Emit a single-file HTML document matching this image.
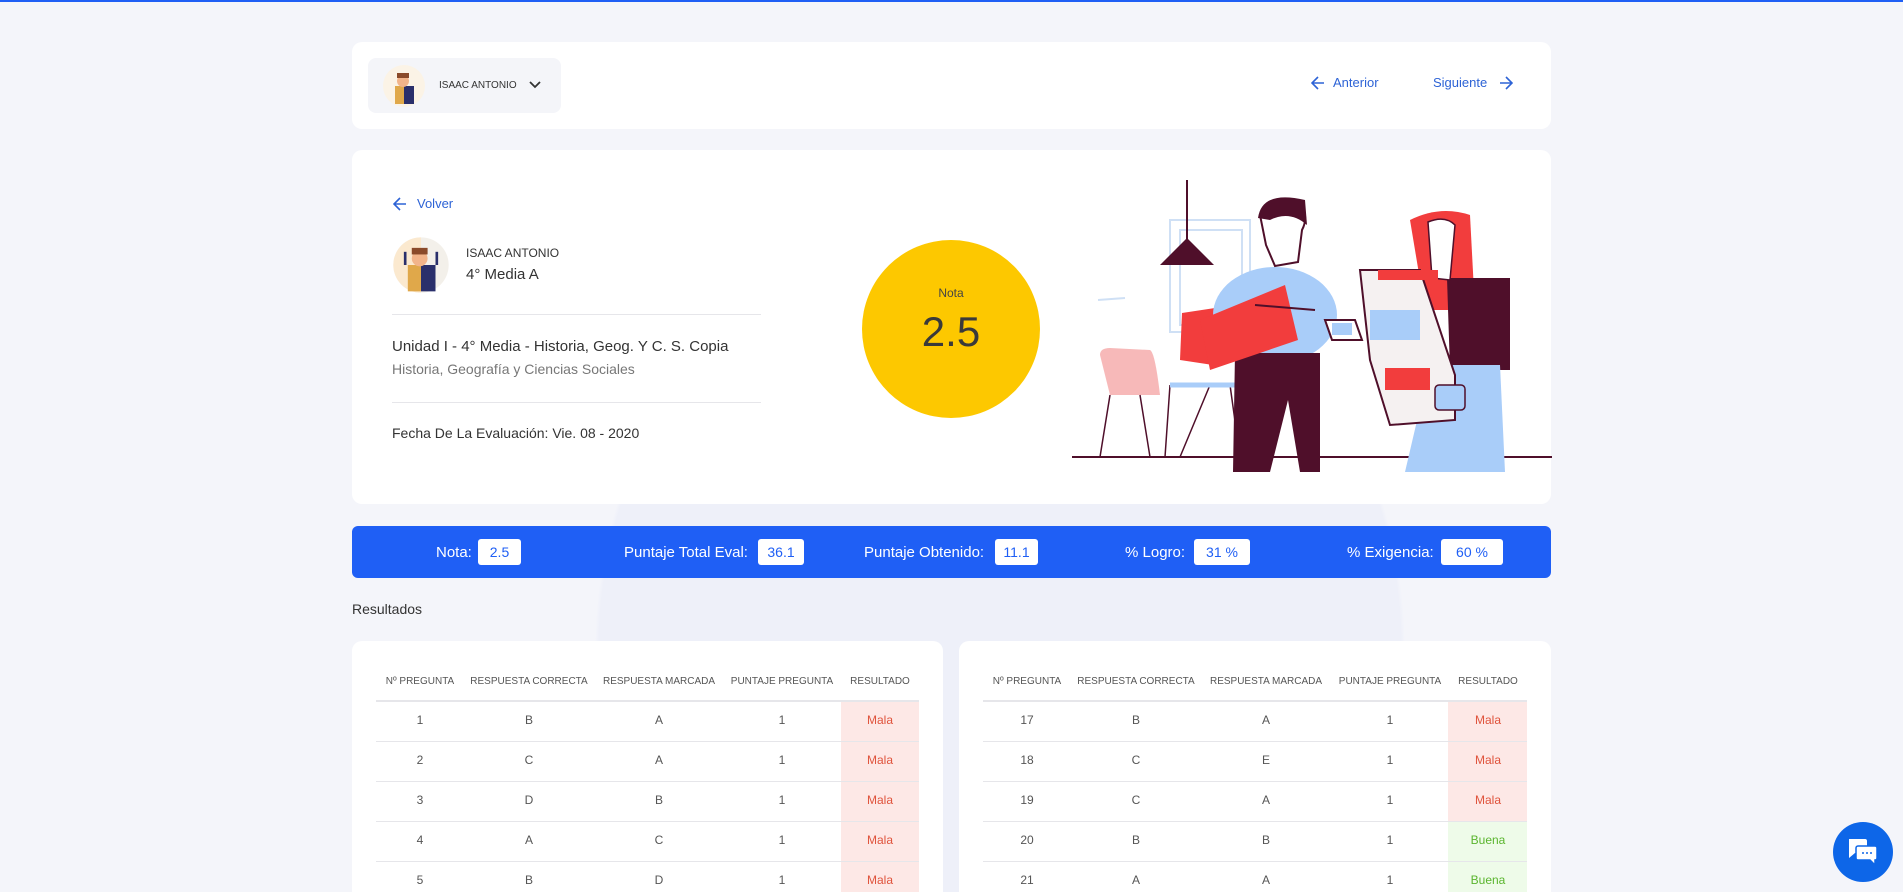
<!DOCTYPE html>
<html style="width:1903px;height:892px;overflow:hidden"><head><meta charset="utf-8"><style>
*{margin:0;padding:0;box-sizing:border-box}
body{width:1903px;height:892px;overflow:hidden;background:#f4f5fa;font-family:"Liberation Sans",sans-serif;position:relative;color:#333}
#wrap{position:absolute;left:0;top:0;width:1903px;height:892px;overflow:hidden;background:radial-gradient(ellipse 405px 450px at 1000px 650px,#eef0f9 99%,rgba(238,240,249,0) 100%)}
.a{position:absolute}
.card{position:absolute;background:#fff;border-radius:10px}
.blue{color:#2d63d6}
.lbl{position:absolute;color:#fff;font-size:15px;top:544px}
.box{position:absolute;background:#fff;border-radius:3px;top:539px;height:26px;font-size:14px;color:#1f5ff5;text-align:center;line-height:26px}
.th{position:absolute;top:676px;font-size:10px;color:#555;transform:translateX(-50%);white-space:nowrap}
.td{position:absolute;font-size:12px;line-height:14px;color:#555;transform:translateX(-50%)}
.hl{position:absolute;height:1px;background:#e6e6ea}
</style></head><body><div id="wrap">
<div class="a" style="left:0;top:0;width:1903px;height:2px;background:#1f5ff5"></div>

<div class="card" style="left:352px;top:42px;width:1199px;height:87px"></div>
<div class="a" style="left:368px;top:58px;width:193px;height:55px;background:#f4f5f9;border-radius:8px"></div>
<svg class="a" style="left:382px;top:64px" width="44" height="44" viewBox="0 0 44 44"><circle cx="22" cy="22" r="21" fill="#fbf3e6"/><rect x="13" y="22" width="9" height="18" fill="#e0a84a"/><rect x="22" y="22" width="10" height="18" fill="#2a2f6b"/><circle cx="21" cy="17" r="6" fill="#f2b48a"/><rect x="15" y="9" width="12" height="5" fill="#8a4a2a"/></svg>
<div class="a" style="left:439px;top:80px;font-size:10px;color:#333">ISAAC ANTONIO</div>
<svg class="a" style="left:529px;top:80px" width="12" height="10" viewBox="0 0 12 10"><path d="M1 2l5 5 5-5" fill="none" stroke="#333" stroke-width="1.8"/></svg>
<svg class="a" style="left:1311px;top:76px" width="14" height="14" viewBox="0 0 14 14"><path d="M13 7H2M7 1L1 7l6 6" fill="none" stroke="#2d63d6" stroke-width="1.6"/></svg>
<div class="a blue" style="left:1333px;top:75px;font-size:13px">Anterior</div>
<div class="a blue" style="left:1433px;top:75px;font-size:13px">Siguiente</div>
<svg class="a" style="left:1499px;top:76px" width="14" height="14" viewBox="0 0 14 14"><path d="M1 7h11M7 1l6 6-6 6" fill="none" stroke="#2d63d6" stroke-width="1.6"/></svg>

<div class="card" style="left:352px;top:150px;width:1199px;height:354px"></div>
<svg class="a" style="left:393px;top:197px" width="14" height="14" viewBox="0 0 14 14"><path d="M13 7H2M7 1L1 7l6 6" fill="none" stroke="#2d63d6" stroke-width="1.6"/></svg>
<div class="a blue" style="left:417px;top:196px;font-size:13px">Volver</div>
<svg class="a" style="left:392px;top:236px" width="58" height="58" viewBox="0 0 44 44"><circle cx="22" cy="22" r="21" fill="#f3f0ea"/><path d="M1 22a21 21 0 0 1 21-21v42A21 21 0 0 1 1 22z" fill="#fbe9cf"/><rect x="12" y="22" width="10" height="20" fill="#e0a84a"/><rect x="22" y="22" width="11" height="20" fill="#2a2f6b"/><circle cx="21" cy="17" r="6" fill="#f2b48a"/><rect x="15" y="9" width="12" height="5" fill="#8a4a2a"/><rect x="9" y="12" width="2" height="10" fill="#2a2f6b"/><rect x="33" y="12" width="2" height="10" fill="#2a2f6b"/></svg>
<div class="a" style="left:466px;top:246px;font-size:12px;color:#333">ISAAC ANTONIO</div>
<div class="a" style="left:466px;top:266px;font-size:15px;color:#333">4° Media A</div>
<div class="hl" style="left:392px;top:314px;width:369px"></div>
<div class="a" style="left:392px;top:338px;font-size:15px;color:#333">Unidad I - 4° Media - Historia, Geog. Y C. S. Copia</div>
<div class="a" style="left:392px;top:361px;font-size:14px;color:#777">Historia, Geografía y Ciencias Sociales</div>
<div class="hl" style="left:392px;top:402px;width:369px"></div>
<div class="a" style="left:392px;top:425px;font-size:14px;color:#333">Fecha De La Evaluación: Vie. 08 - 2020</div>

<div class="a" style="left:862px;top:240px;width:178px;height:178px;border-radius:50%;background:#fdc800"></div>
<div class="a" style="left:862px;top:286px;width:178px;text-align:center;font-size:12px;color:#444">Nota</div>
<div class="a" style="left:862px;top:308px;width:178px;text-align:center;font-size:42px;color:#3a3a3a">2.5</div>

<svg class="a" style="left:1070px;top:170px" width="482" height="320" viewBox="0 0 482 320">
<rect x="100" y="50" width="80" height="112" fill="none" stroke="#cfe0f5" stroke-width="2"/>
<rect x="110" y="60" width="62" height="95" fill="none" stroke="#cfe0f5" stroke-width="2"/>
<line x1="117" y1="10" x2="117" y2="70" stroke="#4f0f2a" stroke-width="2"/>
<path d="M90 95L117 68L144 95Z" fill="#4f0f2a"/>
<line x1="28" y1="130" x2="55" y2="128" stroke="#cfe0f5" stroke-width="2"/>
<path d="M30 185Q30 178 40 178L80 180Q85 182 90 225H40Z" fill="#f7b9b9"/>
<path d="M40 225L30 287M70 225L80 287M100 215L95 287M160 215L170 287M140 215L110 287" stroke="#4f0f2a" stroke-width="1.5" fill="none"/>
<path d="M100 215H175" stroke="#a9cdf9" stroke-width="5"/>
<line x1="2" y1="287" x2="482" y2="287" stroke="#4f0f2a" stroke-width="2"/>
<path d="M112 143L145 138L143 195L110 190Z" fill="#f23d3d"/>
<ellipse cx="205" cy="145" rx="62" ry="48" fill="#a9cdf9"/>
<path d="M165 183H250V302H230L218 230L200 302H163Z" fill="#4f0f2a"/>
<path d="M130 150L215 115L228 170L140 200Z" fill="#f23d3d"/>
<path d="M190 45Q195 25 228 30Q240 45 232 60L228 92L205 96L196 75Z" fill="#fff" stroke="#4f0f2a" stroke-width="2"/>
<path d="M188 48Q192 20 235 30L237 55Q220 40 200 50Z" fill="#4f0f2a"/>
<path d="M185 135L245 140" stroke="#4f0f2a" stroke-width="2"/>
<path d="M255 150H285L292 170H262Z" fill="#fff" stroke="#4f0f2a" stroke-width="2"/><rect x="262" y="153" width="20" height="12" fill="#a9cdf9"/>
<path d="M340 50Q370 35 400 45L405 140L355 140Z" fill="#f23d3d"/>
<path d="M377 108L440 108L440 200L380 200Z" fill="#4f0f2a"/>
<path d="M360 195L430 195L435 302H335Z" fill="#a9cdf9"/>
<path d="M358 52Q375 45 385 55L380 110L362 108Z" fill="#fff" stroke="#4f0f2a" stroke-width="1.5"/>
<path d="M290 100L350 100L385 205L385 250L320 255L300 190Z" fill="#f5f1f1" stroke="#4f0f2a" stroke-width="2"/>
<rect x="300" y="140" width="50" height="30" fill="#a9cdf9"/>
<rect x="315" y="198" width="45" height="22" fill="#f23d3d"/>
<rect x="308" y="100" width="60" height="10" fill="#f23d3d"/>
<rect x="365" y="215" width="30" height="25" rx="4" fill="#a9cdf9" stroke="#4f0f2a" stroke-width="1.5"/>
</svg>

<div class="a" style="left:352px;top:526px;width:1199px;height:52px;background:#1f5ff5;border-radius:6px"></div>
<div class="lbl" style="left:436px">Nota:</div><div class="box" style="left:478px;width:43px">2.5</div>
<div class="lbl" style="left:624px">Puntaje Total Eval:</div><div class="box" style="left:758px;width:46px">36.1</div>
<div class="lbl" style="left:864px">Puntaje Obtenido:</div><div class="box" style="left:995px;width:43px">11.1</div>
<div class="lbl" style="left:1125px">% Logro:</div><div class="box" style="left:1194px;width:56px">31 %</div>
<div class="lbl" style="left:1347px">% Exigencia:</div><div class="box" style="left:1441px;width:62px">60 %</div>

<div class="a" style="left:352px;top:601px;font-size:14px;color:#333">Resultados</div>

<div class="card" style="left:352px;top:641px;width:591px;height:251px;border-radius:10px 10px 0 0"></div>
<div class="card" style="left:959px;top:641px;width:592px;height:251px;border-radius:10px 10px 0 0"></div>

<div class="a" style="left:841px;top:701px;width:78px;height:191px;background:#fde8e6"></div>
<div class="a" style="left:1448px;top:701px;width:79px;height:120px;background:#fde8e6"></div>
<div class="a" style="left:1448px;top:821px;width:79px;height:71px;background:#eefbe9"></div>

<div class="hl" style="left:376px;top:700px;width:543px;height:2px"></div>
<div class="hl" style="left:376px;top:741px;width:543px"></div>
<div class="hl" style="left:376px;top:781px;width:543px"></div>
<div class="hl" style="left:376px;top:821px;width:543px"></div>
<div class="hl" style="left:376px;top:861px;width:543px"></div>
<div class="hl" style="left:983px;top:700px;width:544px;height:2px"></div>
<div class="hl" style="left:983px;top:741px;width:544px"></div>
<div class="hl" style="left:983px;top:781px;width:544px"></div>
<div class="hl" style="left:983px;top:821px;width:544px"></div>
<div class="hl" style="left:983px;top:861px;width:544px"></div>

<div class="th" style="left:420px">Nº PREGUNTA</div><div class="th" style="left:529px">RESPUESTA CORRECTA</div><div class="th" style="left:659px">RESPUESTA MARCADA</div><div class="th" style="left:782px">PUNTAJE PREGUNTA</div><div class="th" style="left:880px">RESULTADO</div>
<div class="th" style="left:1027px">Nº PREGUNTA</div><div class="th" style="left:1136px">RESPUESTA CORRECTA</div><div class="th" style="left:1266px">RESPUESTA MARCADA</div><div class="th" style="left:1390px">PUNTAJE PREGUNTA</div><div class="th" style="left:1488px">RESULTADO</div>

<div class="td" style="left:420px;top:713px">1</div><div class="td" style="left:529px;top:713px">B</div><div class="td" style="left:659px;top:713px">A</div><div class="td" style="left:782px;top:713px">1</div><div class="td" style="left:880px;top:713px;color:#e0533c">Mala</div>
<div class="td" style="left:420px;top:753px">2</div><div class="td" style="left:529px;top:753px">C</div><div class="td" style="left:659px;top:753px">A</div><div class="td" style="left:782px;top:753px">1</div><div class="td" style="left:880px;top:753px;color:#e0533c">Mala</div>
<div class="td" style="left:420px;top:793px">3</div><div class="td" style="left:529px;top:793px">D</div><div class="td" style="left:659px;top:793px">B</div><div class="td" style="left:782px;top:793px">1</div><div class="td" style="left:880px;top:793px;color:#e0533c">Mala</div>
<div class="td" style="left:420px;top:833px">4</div><div class="td" style="left:529px;top:833px">A</div><div class="td" style="left:659px;top:833px">C</div><div class="td" style="left:782px;top:833px">1</div><div class="td" style="left:880px;top:833px;color:#e0533c">Mala</div>
<div class="td" style="left:420px;top:873px">5</div><div class="td" style="left:529px;top:873px">B</div><div class="td" style="left:659px;top:873px">D</div><div class="td" style="left:782px;top:873px">1</div><div class="td" style="left:880px;top:873px;color:#e0533c">Mala</div>

<div class="td" style="left:1027px;top:713px">17</div><div class="td" style="left:1136px;top:713px">B</div><div class="td" style="left:1266px;top:713px">A</div><div class="td" style="left:1390px;top:713px">1</div><div class="td" style="left:1488px;top:713px;color:#e0533c">Mala</div>
<div class="td" style="left:1027px;top:753px">18</div><div class="td" style="left:1136px;top:753px">C</div><div class="td" style="left:1266px;top:753px">E</div><div class="td" style="left:1390px;top:753px">1</div><div class="td" style="left:1488px;top:753px;color:#e0533c">Mala</div>
<div class="td" style="left:1027px;top:793px">19</div><div class="td" style="left:1136px;top:793px">C</div><div class="td" style="left:1266px;top:793px">A</div><div class="td" style="left:1390px;top:793px">1</div><div class="td" style="left:1488px;top:793px;color:#e0533c">Mala</div>
<div class="td" style="left:1027px;top:833px">20</div><div class="td" style="left:1136px;top:833px">B</div><div class="td" style="left:1266px;top:833px">B</div><div class="td" style="left:1390px;top:833px">1</div><div class="td" style="left:1488px;top:833px;color:#5ab52e">Buena</div>
<div class="td" style="left:1027px;top:873px">21</div><div class="td" style="left:1136px;top:873px">A</div><div class="td" style="left:1266px;top:873px">A</div><div class="td" style="left:1390px;top:873px">1</div><div class="td" style="left:1488px;top:873px;color:#5ab52e">Buena</div>

<div class="a" style="left:1833px;top:822px;width:60px;height:60px;border-radius:50%;background:#0d66e8"></div>
<svg class="a" style="left:1846px;top:836px" width="34" height="32" viewBox="0 0 34 32"><path d="M3 3h16a2 2 0 0 1 2 2v10a2 2 0 0 1-2 2H9l-6 5z" fill="#fff"/><path d="M12 10h17a2 2 0 0 1 2 2v10a2 2 0 0 1-2 2v5l-5-5H12a2 2 0 0 1-2-2V12a2 2 0 0 1 2-2z" fill="#fff" stroke="#0d66e8" stroke-width="1.5"/><circle cx="17" cy="17" r="1" fill="#0d66e8"/><circle cx="21" cy="17" r="1" fill="#0d66e8"/><circle cx="25" cy="17" r="1" fill="#0d66e8"/></svg>
</div></body></html>
